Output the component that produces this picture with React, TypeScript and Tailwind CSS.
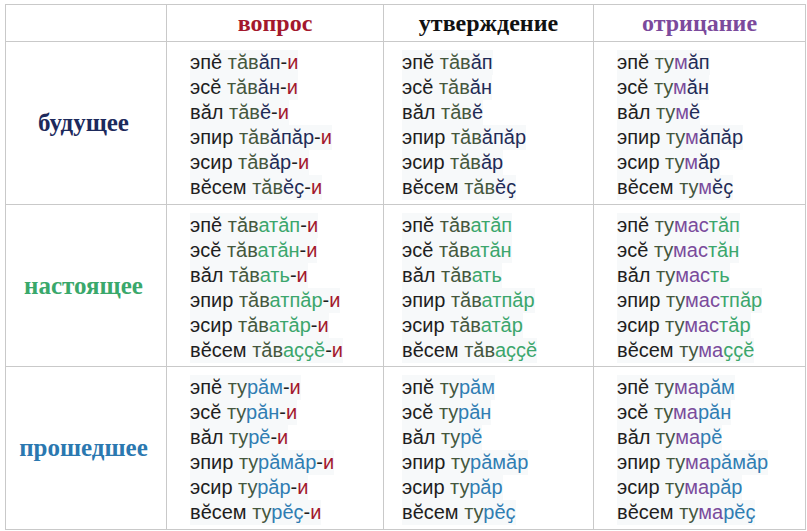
import React from "react";

type Seg = [string, string];
const K = "text-[#1e1e1e]";
const S = "text-[#45573d]"; // stem olive
const N = "text-[#1f2b57]"; // navy
const R = "text-[#a3182d]"; // red
const G = "text-[#3ba66c]"; // green
const B = "text-[#2f7db3]"; // blue
const P = "text-[#7a4b9c]"; // purple

const pron = ["эпӗ", "эсӗ", "вӑл", "эпир", "эсир", "вӗсем"];

function lines(parts: Seg[][], q: boolean): Seg[][] {
  return parts.map((p, i) => {
    const out: Seg[] = [[pron[i] + " ", K], ...p];
    if (q) out.push(["-", K], ["и", R]);
    return out;
  });
}

const fut: Seg[][] = [
  [["тӑв", S], ["ӑп", N]],
  [["тӑв", S], ["ӑн", N]],
  [["тӑв", S], ["ӗ", N]],
  [["тӑв", S], ["ӑпӑр", N]],
  [["тӑв", S], ["ӑр", N]],
  [["тӑв", S], ["ӗҫ", N]],
];
const futNeg: Seg[][] = [
  [["ту", S], ["м", P], ["ӑп", N]],
  [["ту", S], ["м", P], ["ӑн", N]],
  [["ту", S], ["м", P], ["ӗ", N]],
  [["ту", S], ["м", P], ["ӑпӑр", N]],
  [["ту", S], ["м", P], ["ӑр", N]],
  [["ту", S], ["м", P], ["ӗҫ", N]],
];
const pres: Seg[][] = [
  [["тӑв", S], ["атӑп", G]],
  [["тӑв", S], ["атӑн", G]],
  [["тӑв", S], ["ать", G]],
  [["тӑв", S], ["атпӑр", G]],
  [["тӑв", S], ["атӑр", G]],
  [["тӑв", S], ["аҫҫӗ", G]],
];
const presNeg: Seg[][] = [
  [["ту", S], ["мас", P], ["тӑп", G]],
  [["ту", S], ["мас", P], ["тӑн", G]],
  [["ту", S], ["мас", P], ["ть", G]],
  [["ту", S], ["мас", P], ["тпӑр", G]],
  [["ту", S], ["мас", P], ["тӑр", G]],
  [["ту", S], ["ма", P], ["ҫҫӗ", G]],
];
const past: Seg[][] = [
  [["ту", S], ["рӑм", B]],
  [["ту", S], ["рӑн", B]],
  [["ту", S], ["рӗ", B]],
  [["ту", S], ["рӑмӑр", B]],
  [["ту", S], ["рӑр", B]],
  [["ту", S], ["рӗҫ", B]],
];
const pastNeg: Seg[][] = [
  [["ту", S], ["ма", P], ["рӑм", B]],
  [["ту", S], ["ма", P], ["рӑн", B]],
  [["ту", S], ["ма", P], ["рӗ", B]],
  [["ту", S], ["ма", P], ["рӑмӑр", B]],
  [["ту", S], ["ма", P], ["рӑр", B]],
  [["ту", S], ["ма", P], ["рӗҫ", B]],
];

const serif = "font-['Liberation_Serif','Times_New_Roman',serif] font-bold";

function Block({ data, pl }: { data: Seg[][]; pl: string }) {
  return (
    <div className={`flex flex-col justify-center h-full pt-[4px] ${pl} font-['Liberation_Sans',Arial,sans-serif] text-[20px] leading-[25px]`}>
      {data.map((l, i) => (
        <div key={i} className="flex">
          <span className="bg-[#f7f9fa] whitespace-pre">
            {l.map(([t, c], j) => (
              <span key={j} className={c}>
                {t}
              </span>
            ))}
          </span>
        </div>
      ))}
    </div>
  );
}

function Label({ text, color }: { text: string; color: string }) {
  return (
    <div className={`flex items-center justify-center h-full pr-[5px] ${serif} text-[25px] ${color}`}>{text}</div>
  );
}

const cell = "border-r border-b border-[#c9c9c9] bg-white";

export default function App() {
  const rows: [string, string, Seg[][], Seg[][], Seg[][]][] = [
    ["будущее", "text-[#1d2a5c]", lines(fut, true), lines(fut, false), lines(futNeg, false)],
    ["настоящее", "text-[#3aa86b]", lines(pres, true), lines(pres, false), lines(presNeg, false)],
    ["прошедшее", "text-[#2b78b0]", lines(past, true), lines(past, false), lines(pastNeg, false)],
  ];
  return (
    <div className="w-[807px] h-[531px] bg-white pt-[4px] pl-[5px]">
      <div className="grid grid-cols-[161px_217px_210px_212px] grid-rows-[37px_163px_162px_163px] border-l border-t border-[#c9c9c9] w-fit">
        <div className={cell} />
        <div className={cell}>
          <div className={`flex items-center justify-center h-full ${serif} text-[24px] text-[#a3182d]`}>вопрос</div>
        </div>
        <div className={cell}>
          <div className={`flex items-center justify-center h-full ${serif} text-[24px] text-[#111111]`}>утверждение</div>
        </div>
        <div className={cell}>
          <div className={`flex items-center justify-center h-full ${serif} text-[24px] text-[#7b4a9c]`}>отрицание</div>
        </div>
        {rows.map(([lab, col, a, b, c]) => (
          <React.Fragment key={lab}>
            <div className={cell}>
              <Label text={lab} color={col} />
            </div>
            <div className={cell}>
              <Block data={a} pl="pl-[23px]" />
            </div>
            <div className={cell}>
              <Block data={b} pl="pl-[18px]" />
            </div>
            <div className={cell}>
              <Block data={c} pl="pl-[23px]" />
            </div>
          </React.Fragment>
        ))}
      </div>
    </div>
  );
}
